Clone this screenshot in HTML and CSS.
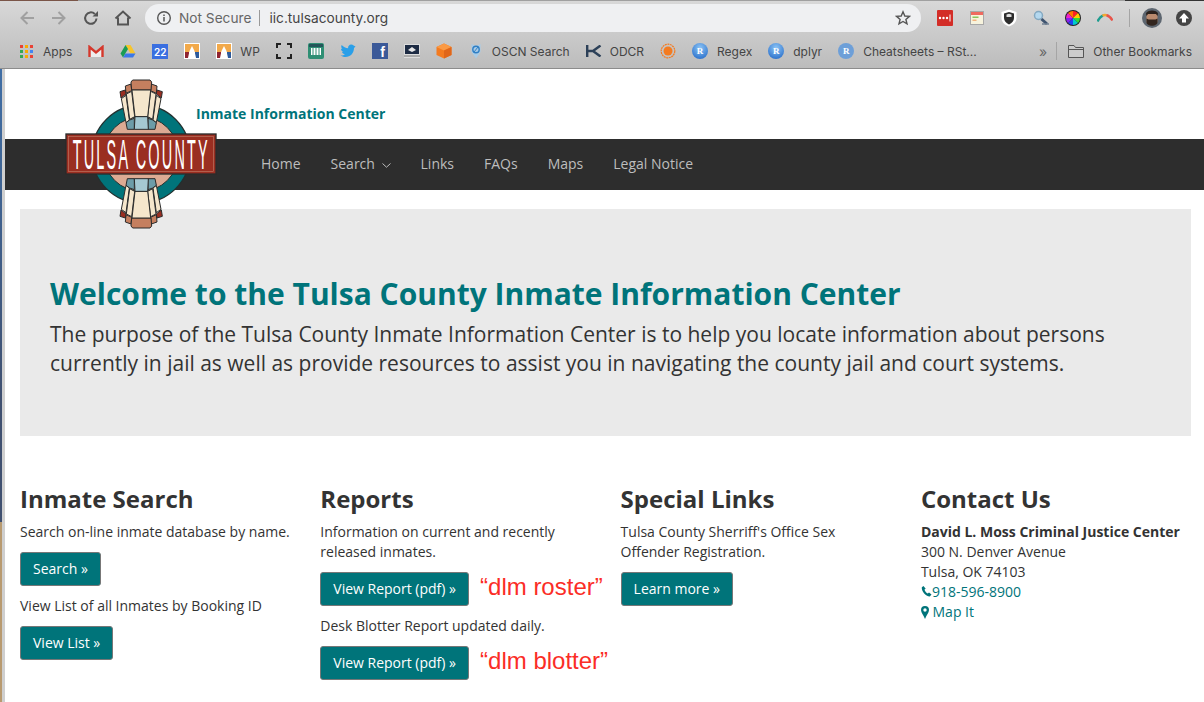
FILE: index.html
```html
<!DOCTYPE html>
<html lang="en">
<head>
    <meta charset="UTF-8">
    <title>Inmate Information Center</title>
    <link rel="stylesheet" href="styles.css">
</head>
<body>

<div class="window-edge"></div>
<div class="chrome">
    <div class="toolbar">
        <svg class="nav-icon" width="18" height="18" viewBox="0 0 18 18"><path d="M16 9H4M9.500 3 3.500 9 9.500 15" fill="none" stroke="#a0a0a0" stroke-width="2"/></svg>
        <svg class="nav-icon" width="18" height="18" viewBox="0 0 18 18"><path d="M2 9H14M8.500 3 14.500 9 8.500 15" fill="none" stroke="#a0a0a0" stroke-width="2"/></svg>
        <svg class="nav-icon" width="18" height="18" viewBox="0 0 18 18"><path d="M14.500 9.500A5.700 5.700 0 1 1 12.800 5" fill="none" stroke="#555" stroke-width="2"/><path d="M10.500 7.500h5.500V2z" fill="#555"/></svg>
        <svg class="nav-icon" width="18" height="18" viewBox="0 0 18 18"><path d="M1.500 9.500 9 2.500l7.500 7M4 8.500V15.500H14V8.500" fill="none" stroke="#555" stroke-width="2"/></svg>
        <div class="omnibox">
            <svg width="16" height="16" viewBox="0 0 16 16"><circle cx="8" cy="8" r="6.300" fill="none" stroke="#555" stroke-width="1.400"/><path d="M8 7v4.500M8 4.500v1.400" stroke="#555" stroke-width="1.500"/></svg>
            <span class="not-secure">Not Secure</span>
            <span class="url">iic.tulsacounty.org</span>
            <svg class="star" width="16" height="16" viewBox="0 0 16 16"><path d="M8 1.800 9.800 6l4.600.4-3.500 3 1.100 4.500L8 11.500l-4 2.400 1.100-4.500-3.500-3L6.200 6z" fill="none" stroke="#555" stroke-width="1.400"/></svg>
        </div>
        <div class="extensions">
            <svg width="16" height="16" viewBox="0 0 16 16"><rect width="16" height="16" rx="1" fill="#d32d27"/><circle cx="3" cy="8" r="1.200" fill="#fff"/><circle cx="6.500" cy="8" r="1.200" fill="#fff"/><circle cx="10" cy="8" r="1.200" fill="#fff"/><path d="M13 4.500v7" stroke="#fff"/></svg>
            <svg width="16" height="16" viewBox="0 0 16 16"><rect x="1.500" y="1.500" width="13" height="13" fill="#f7f3dd" stroke="#a8a8a8"/><rect x="2" y="2" width="12" height="3" fill="#ef6a5f"/><rect x="3.500" y="6.500" width="6" height="1.500" fill="#8ac55a"/><rect x="3.500" y="9.500" width="4" height="1.500" fill="#f3b27c"/></svg>
            <svg width="16" height="18" viewBox="0 0 16 18"><path d="M8 .5 15.500 3V9c0 4-3 7-7.500 8.500C3.500 16 .5 13 .5 9V3z" fill="#fff"/><path d="M8 3 13 4.500V9c0 3-2 5-5 6.500C5 14 3 12 3 9V4.500z" fill="#2e2e2e"/><path d="M5.500 5.500 8 4.800 10.500 5.500V8H5.500z" fill="#ddd"/></svg>
            <svg width="16" height="16" viewBox="0 0 16 16"><circle cx="5.500" cy="5.500" r="4" fill="#b4d8ef" stroke="#84a8c0" stroke-width="1.500"/><path d="M8.500 9 14 14" stroke="#3f5470" stroke-width="3"/><path d="M9 14H16" stroke="#6f7f92" stroke-width="1.500"/></svg>
            <svg width="16" height="16" viewBox="0 0 16 16"><circle cx="8" cy="8" r="8" fill="#222"/><path d="M8 8V1A7 7 0 0 1 13 3z" fill="#f22"/><path d="M8 8 13 3A7 7 0 0 1 15 8z" fill="#fc0"/><path d="M8 8H15A7 7 0 0 1 13 13z" fill="#3d3"/><path d="M8 8 13 13A7 7 0 0 1 8 15z" fill="#0cc"/><path d="M8 8V15A7 7 0 0 1 3 13z" fill="#24e"/><path d="M8 8 3 13A7 7 0 0 1 1 8z" fill="#82e"/><path d="M8 8H1A7 7 0 0 1 3 3z" fill="#e2c"/><path d="M8 8 3 3A7 7 0 0 1 8 1z" fill="#f70"/></svg>
            <svg width="16" height="10" viewBox="0 0 16 10"><path d="M.5 8.500Q3 3.500 6 2.500" fill="none" stroke="#1f9d8f" stroke-width="2.500"/><path d="M5.500 2.700Q8 1.200 10 2.500" fill="none" stroke="#f0a830" stroke-width="2.500"/><path d="M9.500 2.200Q13 3 15.500 7.500" fill="none" stroke="#e8544a" stroke-width="2.500"/></svg>
        </div>
        <span class="divider"></span>
        <svg class="avatar" width="20" height="20" viewBox="0 0 20 20"><circle cx="10" cy="10" r="10" fill="#5d6670"/><path d="M4.500 8C4.500 3.500 15.500 3.500 15.500 8V13C15.500 18 4.500 18 4.500 13z" fill="#b98a6e"/><path d="M4 5.500C5 1.500 15 1.500 16 5.500L15.500 8 14 6H6L4.500 8z" fill="#2c221d"/><path d="M4.500 10.500 6.500 11.500H13.500L15.500 10.500V14C15.500 19 4.500 19 4.500 14z" fill="#33261f"/></svg>
        <span class="update"><svg width="10" height="10" viewBox="0 0 10 10"><path d="M5 0 10 5.500H7V9.500H3V5.500H0z" fill="#fff"/></svg></span>
    </div>
    <div class="bookmarks">
        <span class="bm"><span class="apps-grid"><i></i><i></i><i></i><i></i><i></i><i></i><i></i><i></i><i></i></span><b>Apps</b></span>
        <span class="bm"><svg width="16" height="13" viewBox="0 0 16 13"><path d="M1.500 12V2L8 7.500 14.500 2V12" fill="#eee" stroke="#d5382c" stroke-width="2.400"/></svg></span>
        <span class="bm"><svg width="16" height="14" viewBox="0 0 16 14"><path d="M5.500 1H10.500L15.500 9.500H10.500z" fill="#f7c52b"/><path d="M5.500 1 .5 9.500 3 13.500 8 5z" fill="#1a9c54"/><path d="M3 13.500H13L15.500 9.500H5.500z" fill="#3c78e8"/></svg></span>
        <span class="bm"><span class="cal">22</span></span>
        <span class="bm"><svg width="16" height="16" viewBox="0 0 16 16"><rect width="16" height="16" fill="#fff"/><rect x="1" y="1" width="14" height="8" fill="#f2a94a"/><rect x="1" y="9" width="4" height="6" fill="#8f2330"/><rect x="11" y="9" width="4" height="6" fill="#2d5a9b"/><path d="M4 15 5.500 8 8 3 10.500 8 12 15z" fill="#fff"/></svg></span>
        <span class="bm"><svg width="16" height="16" viewBox="0 0 16 16"><rect width="16" height="16" fill="#fff"/><rect x="1" y="1" width="14" height="8" fill="#f2a94a"/><rect x="1" y="9" width="4" height="6" fill="#8f2330"/><rect x="11" y="9" width="4" height="6" fill="#2d5a9b"/><path d="M4 15 5.500 8 8 3 10.500 8 12 15z" fill="#fff"/></svg><b>WP</b></span>
        <span class="bm"><svg width="16" height="16" viewBox="0 0 16 16"><path d="M1 5V1H5M11 1H15V5M15 11V15H11M5 15H1V11" fill="none" stroke="#222" stroke-width="2"/></svg></span>
        <span class="bm"><svg width="16" height="16" viewBox="0 0 16 16"><rect width="16" height="16" rx="2" fill="#2f8f74"/><rect x="1" y="1" width="14" height="3" fill="#24565a"/><rect x="3" y="5" width="10" height="7" fill="#fff"/><path d="M5 5v7M8 5v7M11 5v7" stroke="#2f8f74"/></svg></span>
        <span class="bm"><svg width="16" height="14" viewBox="0 0 16 14"><path d="M15.500 2.500 14 4C14 9 10.500 13 5.500 13 3.500 13 1.800 12.400.5 11.500 2.300 11.700 3.800 11.200 5 10.200 3.500 10.100 2.400 9.200 2 8h1.500C2 7.500 1 6.200 1 4.700l1.400.4C1.200 4 .9 2.300 1.700 1c1.700 2 3.900 3.100 6.400 3.300C7.800 2.300 9.200.5 11.200.5c1 0 1.800.4 2.400 1z" fill="#2a9fe8"/></svg></span>
        <span class="bm"><span class="fb">f</span></span>
        <span class="bm"><svg width="16" height="16" viewBox="0 0 16 16"><rect y="1" width="16" height="14" fill="#ddd"/><rect x="1" y="2" width="14" height="9" fill="#1e2c44"/><path d="M4 7 8 4l4 3-4 2z" fill="#e8e8e8"/><path d="M0 13H16" stroke="#777"/></svg></span>
        <span class="bm"><svg width="16" height="16" viewBox="0 0 16 16"><path d="M8 .5 15.500 4V12L8 15.500.5 12V4z" fill="#f47b20"/><path d="M.5 4 8 7.500 15.500 4 8 .5z" fill="#fa9a45"/><path d="M8 7.500V15.500L15.500 12V4z" fill="#e0661a"/></svg></span>
        <span class="bm"><svg width="16" height="16" viewBox="0 0 16 16"><path d="M3.500 1 8 3l4.500-2v8L8 15.500 3.500 9z" fill="#a9cbe6"/><circle cx="8" cy="6.500" r="3.200" fill="none" stroke="#2f7fc4" stroke-width="1.400"/><path d="M6 9 10 4" stroke="#2f7fc4"/></svg><b>OSCN Search</b></span>
        <span class="bm"><svg width="16" height="12" viewBox="0 0 16 12"><path d="M1.200 0V12M1.200 6H7L14.500 .5M7 6l7.500 5.500" fill="none" stroke="#2c4058" stroke-width="2.400"/></svg><b>ODCR</b></span>
        <span class="bm"><svg width="16" height="16" viewBox="0 0 16 16"><circle cx="8" cy="8" r="4.500" fill="#f47b20"/><circle cx="8" cy="8" r="6.800" fill="none" stroke="#f47b20" stroke-width="1.200" stroke-dasharray="2 .6"/></svg></span>
        <span class="bm"><span class="r-ball">R</span><b>Regex</b></span>
        <span class="bm"><span class="r-ball">R</span><b>dplyr</b></span>
        <span class="bm"><span class="r-ball r-flat">R</span><b>Cheatsheets – RSt...</b></span>
        <span class="more">»</span>
        <span class="divider bm-divider"></span>
        <span class="bm other"><svg width="16" height="13" viewBox="0 0 16 13"><path d="M.5 12.500V.5H6L7.500 2.500H15.500V12.500zM.5 4.500H15.500" fill="#ccc" stroke="#555"/></svg><b>Other Bookmarks</b></span>
    </div>
</div>

<div class="page">
    <header class="site-top">
        <!-- logo coords are the reference crop at 3x -->
        <svg class="logo" width="152" height="150" viewBox="45 27 456 450">
            <defs>
                <g id="fan-side" stroke="#2b2b2b" stroke-width="3">
                    <path d="M226 48 243 42 245 62 228 70z" fill="#c57f5f"/>
                    <path d="M210 65 226 60 228 72 213 84z" fill="#9a2e21"/>
                    <path d="M214 86 228 76 238 150 228 158z" fill="#f5e6cc"/>
                    <path d="M229 72 245 64 254 140 239 148z" fill="#f5e6cc"/>
                    <path d="M228 158 239 150 253 145V178H232z" fill="#6d9ca8"/>
                </g>
                <g id="fan">
                    <use href="#fan-side"/>
                    <use href="#fan-side" transform="matrix(-1 0 0 1 547 0)"/>
                    <g stroke="#2b2b2b" stroke-width="3">
                        <path d="M243 36 248 30H300L305 36 303 60H245z" fill="#c57f5f"/>
                        <path d="M246 60H302L293 140H255z" fill="#f5e6cc"/>
                        <path d="M255 140H293L295 178H253z" fill="#a5c8d2"/>
                    </g>
                </g>
            </defs>
            <circle cx="273" cy="252" r="147" fill="#00747a" stroke="#23302f" stroke-width="4"/>
            <circle cx="273" cy="252" r="112" fill="#dcaa93" stroke="#23302f" stroke-width="3"/>
            <use href="#fan"/>
            <use href="#fan" transform="matrix(1 0 0 -1 0 504)"/>
            <rect x="48" y="192" width="450" height="120" fill="#9a2e21" stroke="#2b2b2b" stroke-width="4"/>
            <rect x="55" y="199" width="436" height="106" fill="none" stroke="#c98d78" stroke-width="1.500"/>
            <text transform="translate(68 298) scale(.333 1)" font-family="Liberation Sans, sans-serif" font-size="130" letter-spacing="20" fill="#fff">TULSA COUNTY</text>
        </svg>
        <a class="site-title">Inmate Information Center</a>
    </header>
    <nav class="navbar">
        <a>Home</a>
        <a>Search <svg class="caret" width="9" height="5" viewBox="0 0 9 5"><path d="M.5.500 4.500 4.200 8.500.5" fill="none" stroke="#bbb"/></svg></a>
        <a>Links</a>
        <a>FAQs</a>
        <a>Maps</a>
        <a>Legal Notice</a>
    </nav>
    <section class="hero">
        <h1>Welcome to the Tulsa County Inmate Information Center</h1>
        <p>The purpose of the Tulsa County Inmate Information Center is to help you locate information about persons currently in jail as well as provide resources to assist you in navigating the county jail and court systems.</p>
    </section>
    <div class="columns">
        <div class="col">
            <h2>Inmate Search</h2>
            <p>Search on-line inmate database by name.</p>
            <a class="btn">Search »</a>
            <p>View List of all Inmates by Booking ID</p>
            <a class="btn">View List »</a>
        </div>
        <div class="col">
            <h2>Reports</h2>
            <p>Information on current and recently released inmates.</p>
            <div class="btn-row"><a class="btn">View Report (pdf) »</a><span class="note">“dlm roster”</span></div>
            <p>Desk Blotter Report updated daily.</p>
            <div class="btn-row"><a class="btn">View Report (pdf) »</a><span class="note">“dlm blotter”</span></div>
        </div>
        <div class="col">
            <h2>Special Links</h2>
            <p>Tulsa County Sherriff's Office Sex Offender Registration.</p>
            <a class="btn">Learn more »</a>
        </div>
        <div class="col">
            <h2>Contact Us</h2>
            <address>
                <strong>David L. Moss Criminal Justice Center</strong><br>
                300 N. Denver Avenue<br>
                Tulsa, OK 74103<br>
                <a class="link"><svg width="11" height="12" viewBox="0 0 11 12"><path d="M2.500 1 .8 2.200C.3 6 4.500 11 8.800 11.500L10.500 9.500 8 7.500 6.800 8.500C5.500 8 3.800 6 3.500 4.500L4.700 3.700z" fill="#00747a"/></svg>918-596-8900</a><br>
                <a class="link"><svg class="pin" width="8" height="13" viewBox="0 0 8 13"><path fill-rule="evenodd" d="M4 0A4 4 0 0 0 0 4C0 6.500 2.500 9 4 13 5.500 9 8 6.500 8 4A4 4 0 0 0 4 0zM4 2.300A1.700 1.700 0 1 1 4 5.700 1.700 1.700 0 0 1 4 2.300z" fill="#00747a"/></svg> Map It</a>
            </address>
        </div>
    </div>
</div>

</body>
</html>
```
FILE: styles.css
```css
* {
    box-sizing: border-box;
}
body {
    margin: 0;
    height: 702px;
    overflow: hidden;
    background: white;
    font-family: 'Open Sans', sans-serif;
    color: #333;
}
.window-edge {
    height: 1px;
    background: linear-gradient(to right, #7a5548 78px, #a0a0a0 78px, #a0a0a0 1125px, #333 1125px);
}
.chrome {
    height: 68px;
    background: linear-gradient(#d8d8d8, #bcbcbc);
    border-bottom: 1px solid #8c8c8c;
    font-family: 'Inter', 'Liberation Sans', sans-serif;
}
.toolbar {
    height: 33px;
    display: flex;
    align-items: center;
    padding-left: 18px;
}
.nav-icon {
    margin-right: 14px;
}
.omnibox {
    width: 776px;
    height: 28px;
    margin-left: -1px;
    padding: 0 10px 0 11px;
    display: flex;
    align-items: center;
    background: #eff0f2;
    border-radius: 14px;
    font-size: 13.700px;
}
.not-secure {
    margin-left: 7px;
    padding-right: 8px;
    border-right: 1px solid #999;
    color: #666;
}
.url {
    margin-left: 9px;
    color: #444;
}
.star {
    margin-left: auto;
}
.extensions {
    display: flex;
    align-items: center;
    gap: 16px;
    margin-left: 16px;
}
.divider {
    width: 1px;
    height: 18px;
    background: #a5a5a5;
    margin-left: 16px;
}
.avatar {
    margin-left: 12px;
}
.update {
    width: 16px;
    height: 16px;
    margin-left: 14px;
    border-radius: 50%;
    background: #444;
    display: flex;
    align-items: center;
    justify-content: center;
}
.bookmarks {
    height: 34px;
    display: flex;
    align-items: center;
    padding-left: 20px;
    font-size: 12px;
    color: #444;
}
.bm {
    display: flex;
    align-items: center;
    margin-right: 16px;
}
.bm b {
    font-weight: 400;
    margin-left: 8px;
}
.r-ball + b {
    margin-left: 9px;
}
.apps-grid {
    display: grid;
    grid-template-columns: repeat(3, 3px);
    gap: 2px;
    margin-right: 2px;
}
.apps-grid i {
    height: 3px;
    background: #e94235;
}
.apps-grid i:nth-child(3n+2) {
    background: #f9ab00;
}
.apps-grid i:nth-child(4), .apps-grid i:nth-child(7) {
    background: #34a853;
}
.apps-grid i:nth-child(6) {
    background: #4285f4;
}
.cal {
    width: 16px;
    height: 15px;
    background: #3a6fe0;
    color: white;
    font-size: 10px;
    font-weight: 600;
    text-align: center;
    line-height: 16px;
}
.fb {
    width: 16px;
    height: 16px;
    background: #3b5998;
    color: white;
    font: bold 14px/18px 'Liberation Sans', sans-serif;
    text-align: right;
    padding-right: 3px;
}
.r-ball {
    width: 16px;
    height: 16px;
    border-radius: 50%;
    background: radial-gradient(circle at 50% 30%, #8cc4f5, #1a62c4);
    color: white;
    font: bold 9px/16px 'Liberation Serif', serif;
    text-align: center;
}
.r-flat {
    background: #6d9fd8;
}
.more {
    margin-left: auto;
    font-size: 14px;
    color: #666;
}
.bm-divider {
    margin-left: 9px;
    margin-right: 11px;
}
.other {
    margin-right: 12px;
}
.other b {
    margin-left: 9px;
}
.page {
    padding-left: 5px;
    height: 633px;
    background:
        linear-gradient(#3f6ea5, #3f5070 330px, #3f5070 453px, #b89a70 453px) 0 0 / 2px 100% no-repeat,
        linear-gradient(#cfcfcf, #cfcfcf) 2px 0 / 3px 100% no-repeat;
}
.site-top {
    height: 70px;
    position: relative;
}
.logo {
    position: absolute;
    left: 60px;
    top: 10px;
    z-index: 2;
}
.site-title {
    display: block;
    padding: 35px 0 0 191px;
    color: #00747a;
    font-size: 14px;
    font-weight: 700;
    line-height: 20px;
}
.navbar {
    height: 51px;
    padding: 0 0 2px 256px;
    background: #2d2d2d;
    display: flex;
    align-items: center;
    gap: 30px;
    font-size: 14px;
}
.navbar a {
    color: #bdbdbd;
}
.caret {
    margin-left: 3px;
    vertical-align: 1px;
}
.hero {
    height: 227px;
    margin: 19px 13px 0 15px;
    padding: 63px 30px 0;
    background: #eaeaea;
}
.hero h1 {
    margin: 0 0 4px;
    color: #00747a;
    font-size: 30px;
    font-weight: 700;
    line-height: 44px;
}
.hero p {
    margin: 0;
    font-size: 21px;
    line-height: 29px;
}
.columns {
    display: grid;
    grid-template-columns: repeat(4, 300.300px);
    padding: 45px 0 0 15px;
}
.col h2 {
    margin: 0 0 5px;
    font-size: 24px;
    font-weight: 700;
    line-height: 36px;
}
.col p {
    margin: 0 0 10px;
    font-size: 14px;
    line-height: 20px;
    max-width: 270px;
}
.btn {
    display: inline-block;
    height: 34px;
    padding: 0 12px;
    margin-bottom: 10px;
    background: #00747a;
    border: 1px solid #777;
    border-radius: 3px;
    color: white;
    font-size: 14px;
    line-height: 32px;
}
.btn-row {
    display: flex;
    align-items: flex-start;
}
.note {
    margin-left: 11px;
    color: #fb2d26;
    font: 24px/30px 'Liberation Sans', sans-serif;
}
address {
    font-style: normal;
    font-size: 14px;
    line-height: 20px;
}
.link {
    color: #00747a;
}
.pin {
    vertical-align: -2px;
}
```
